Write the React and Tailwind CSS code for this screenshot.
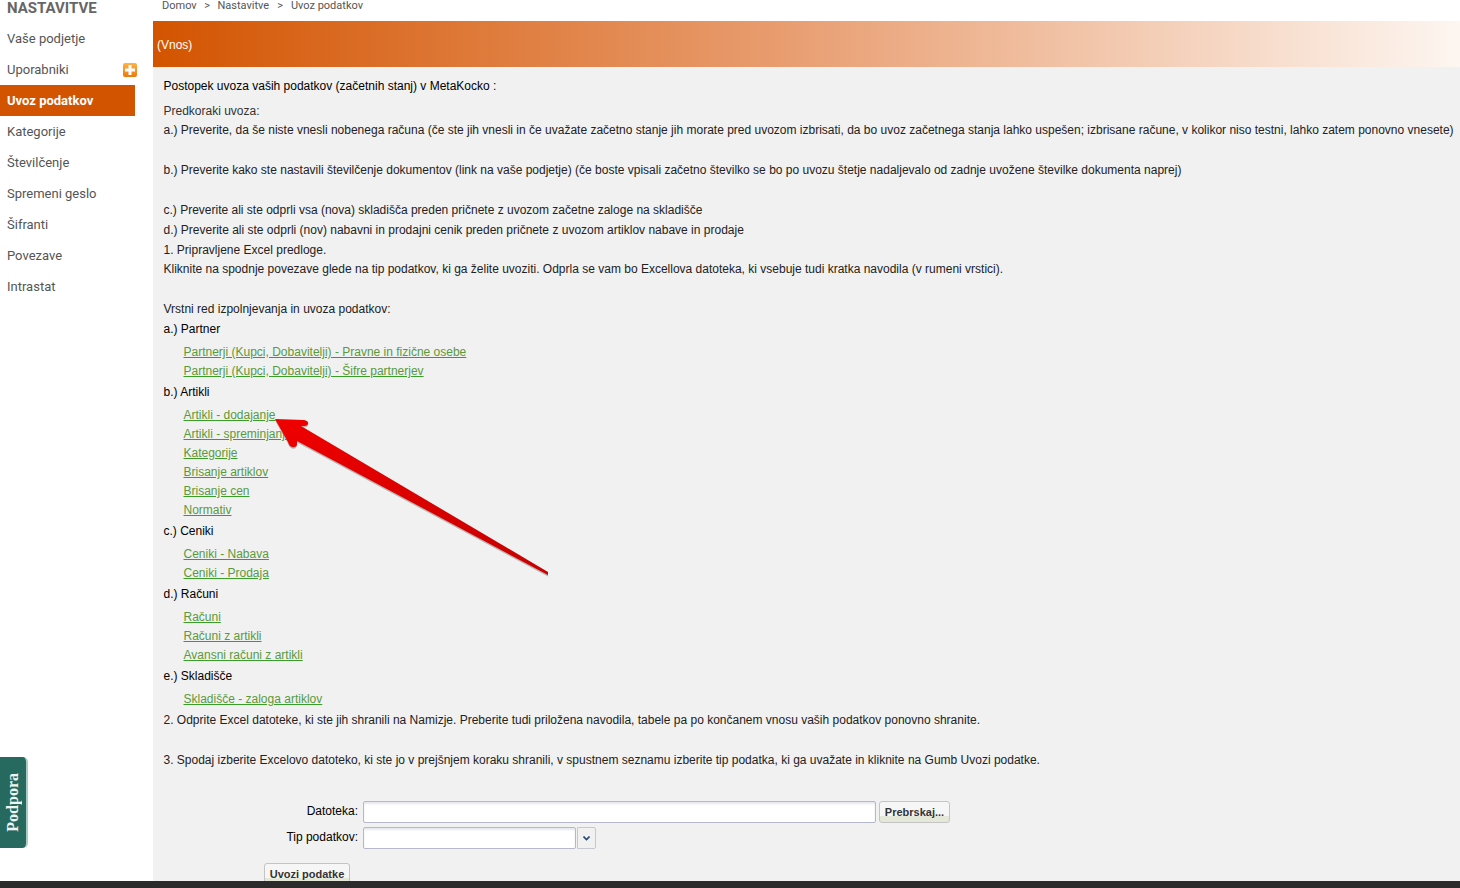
import React from 'react';

const menu = ['Vaše podjetje', 'Uporabniki', 'Uvoz podatkov', 'Kategorije', 'Številčenje', 'Spremeni geslo', 'Šifranti', 'Povezave', 'Intrastat'];

const sections = [
    { title: 'a.) Partner', links: ['Partnerji (Kupci, Dobavitelji) - Pravne in fizične osebe', 'Partnerji (Kupci, Dobavitelji) - Šifre partnerjev'] },
    { title: 'b.) Artikli', links: ['Artikli - dodajanje', 'Artikli - spreminjanje', 'Kategorije', 'Brisanje artiklov', 'Brisanje cen', 'Normativ'] },
    { title: 'c.) Ceniki', links: ['Ceniki - Nabava', 'Ceniki - Prodaja'] },
    { title: 'd.) Računi', links: ['Računi', 'Računi z artikli', 'Avansni računi z artikli'] },
    { title: 'e.) Skladišče', links: ['Skladišče - zaloga artiklov'] },
];

const arrowPath = 'M275 419 L304 420 Q309 421 308 424 Q307 426 303 426 L301 426 L548 572 L548 575 L297 441 L297 445 Q295 448 292 447 Q289 446 288 442 Z';

const Sidebar = () => (
    <aside className="w-[153px] shrink-0 font-['Roboto',sans-serif] text-[13px] text-[#555]">
        <div className="h-[15px] pl-[7px] pt-[1px] text-[15px] leading-[15px] font-bold text-[#666]">NASTAVITVE</div>
        <ul className="mt-[8px] w-[135px]">
            {menu.map(item => (
                <li
                    key={item}
                    className={item === 'Uvoz podatkov'
                        ? 'h-[31px] pl-[7px] leading-[31px] font-bold text-white bg-[#d35400]'
                        : 'h-[31px] pl-[7px] leading-[31px] flex justify-between items-center'}
                >
                    <span>{item}</span>
                    {item === 'Uporabniki' && (
                        <span className="w-[14px] h-[14px] rounded-[2px] bg-[linear-gradient(#ffb347,#ec7a0c)] flex items-center justify-center -mr-[2px]">
                            <svg width="12" height="12" viewBox="0 0 12 12"><path d="M4.5 1h3v3.5H11v3H7.5V11h-3V7.5H1v-3h3.5z" fill="#fff" /></svg>
                        </span>
                    )}
                </li>
            ))}
        </ul>
    </aside>
);

const ImportForm = () => (
    <div className="mt-[31px] text-black">
        <div className="flex items-center h-[22px]">
            <label className="w-[194.5px] pb-[2px] text-right">Datoteka:</label>
            <div className="ml-[5px] w-[513px] h-[22px] bg-white border border-[#b5b8c8] rounded-[2px] shadow-[inset_0_2px_2px_#e6e8ee]" />
            <button className="ml-[3px] w-[71px] h-[22px] border border-[#c4c4c4] rounded-[3px] bg-[linear-gradient(#f6f6f6_70%,#e3e8d8_70%)] text-[11px] font-bold text-[#333]">Prebrskaj...</button>
        </div>
        <div className="flex items-center h-[22px] mt-[4px]">
            <label className="w-[194.5px] pb-[2px] text-right">Tip podatkov:</label>
            <div className="ml-[5px] w-[213px] h-[22px] bg-white border border-[#b5b8c8] rounded-[2px] shadow-[inset_0_2px_2px_#e6e8ee]" />
            <div className="ml-[1px] w-[19px] h-[22px] border border-[#c4c8d0] rounded-r-[2px] bg-[#f1f1f1] flex items-center justify-center">
                <svg width="7" height="5" viewBox="0 0 7 5"><path d="M0.5 0.5l3 3 3-3" fill="none" stroke="#2a4a6a" strokeWidth="1.6" /></svg>
            </div>
        </div>
        <button className="block ml-[100.5px] mt-[14px] w-[86px] h-[22px] border border-[#c4c4c4] rounded-[3px] bg-[linear-gradient(#f6f6f6_70%,#e3e8d8_70%)] text-[11px] font-bold text-[#333]">Uvozi podatke</button>
    </div>
);

const App = () => {
    return (
        <div className="relative w-[1460px] h-[888px] overflow-hidden bg-white flex font-['Liberation_Sans',sans-serif] text-[12px]">
            <Sidebar />
            <main className="w-[1307px] shrink-0">
                <div className="h-[21px] pl-[9px] font-['Roboto',sans-serif] text-[11px] leading-[11px] text-[#555]">
                    Domov<span className="mx-[7.5px]">&gt;</span>Nastavitve<span className="mx-[8px]">&gt;</span>Uvoz podatkov
                </div>
                <div className="h-[46px] pl-[4px] pt-[1px] flex items-center text-white bg-[linear-gradient(to_right,#d35400,#e9a074_50%,#fdf6f1)]">(Vnos)</div>
                <div className="h-[821px] bg-[#f1f1f1] pl-[10.5px] pt-[9px] leading-[20px] text-[#222] whitespace-nowrap">
                    <p className="text-black">Postopek uvoza vaših podatkov (začetnih stanj) v MetaKocko :</p>
                    <p className="mt-[6px] leading-[18px] text-[#333]">Predkoraki uvoza:</p>
                    <p>a.) Preverite, da še niste vnesli nobenega računa (če ste jih vnesli in če uvažate začetno stanje jih morate pred uvozom izbrisati, da bo uvoz začetnega stanja lahko uspešen; izbrisane račune, v kolikor niso testni, lahko zatem ponovno vnesete)</p>
                    <p className="mt-[20px]">b.) Preverite kako ste nastavili številčenje dokumentov (link na vaše podjetje) (če boste vpisali začetno številko se bo po uvozu štetje nadaljevalo od zadnje uvožene številke dokumenta naprej)</p>
                    <p className="mt-[20px]">c.) Preverite ali ste odprli vsa (nova) skladišča preden pričnete z uvozom začetne zaloge na skladišče</p>
                    <p>d.) Preverite ali ste odprli (nov) nabavni in prodajni cenik preden pričnete z uvozom artiklov nabave in prodaje</p>
                    <p>1. Pripravljene Excel predloge.</p>
                    <p className="leading-[19px]">Kliknite na spodnje povezave glede na tip podatkov, ki ga želite uvoziti. Odprla se vam bo Excellova datoteka, ki vsebuje tudi kratka navodila (v rumeni vrstici).</p>
                    <p className="mt-[20px]">Vrstni red izpolnjevanja in uvoza podatkov:</p>
                    {sections.map(section => (
                        <div key={section.title} className="mb-[1px]">
                            <p className="text-black">{section.title}</p>
                            <ul className="mt-[4px] pl-[20px] leading-[19px]">
                                {section.links.map(link => (
                                    <li key={link}><a href="#" className="text-[#5a9a3c] underline decoration-[#3c9e2a]">{link}</a></li>
                                ))}
                            </ul>
                        </div>
                    ))}
                    <p>2. Odprite Excel datoteke, ki ste jih shranili na Namizje. Preberite tudi priložena navodila, tabele pa po končanem vnosu vaših podatkov ponovno shranite.</p>
                    <p className="mt-[20px]">3. Spodaj izberite Excelovo datoteko, ki ste jo v prejšnjem koraku shranili, v spustnem seznamu izberite tip podatka, ki ga uvažate in kliknite na Gumb Uvozi podatke.</p>
                    <ImportForm />
                </div>
            </main>

            {/* arrow drawn over the page */}
            <svg className="absolute left-0 top-0 pointer-events-none" width="1460" height="888">
                <defs>
                    <linearGradient id="arrowFill" x1="0" y1="0" x2="0.2" y2="1">
                        <stop offset="0" stopColor="#f00000" />
                        <stop offset="1" stopColor="#cc0000" />
                    </linearGradient>
                </defs>
                <path d={arrowPath} fill="#777" opacity="0.5" transform="translate(0 1.5)" />
                <path d={arrowPath} fill="url(#arrowFill)" />
            </svg>

            <div className="absolute left-0 top-[757px] w-[28px] h-[91px] rounded-r-[5px] bg-[#26695f] border-r-2 border-[#a9c9c4] flex items-center justify-center">
                <span className="[writing-mode:vertical-rl] rotate-180 font-['Liberation_Serif',serif] font-bold text-[16px] text-[#eef5f3]">Podpora</span>
            </div>

            <div className="absolute left-0 top-[881px] w-full h-[7px] bg-[#2b2b2b]" />
        </div>
    );
};

export default App;
